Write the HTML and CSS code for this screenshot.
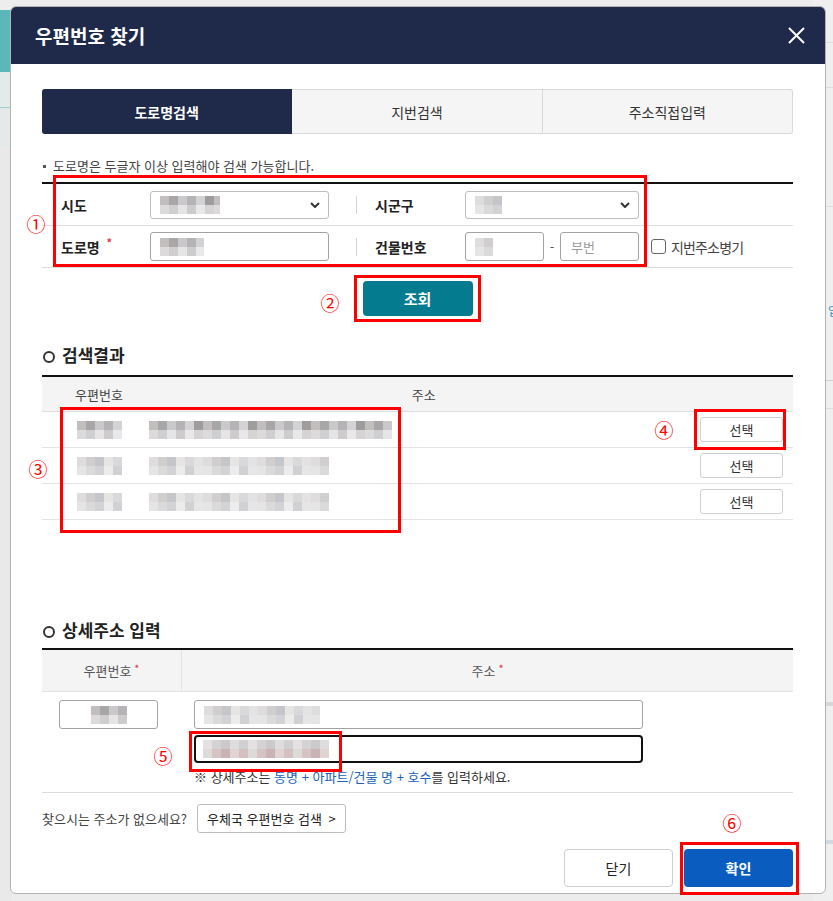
FILE: index.html
```html
<!DOCTYPE html>
<html lang="ko">
<head>
    <meta charset="UTF-8">
    <meta name="viewport" content="width=device-width, initial-scale=1.0">
    <title>우편번호 찾기</title>
    <link rel="stylesheet" href="styles.css">
</head>
<body>
    <div class="bg-left"></div>
    <div class="bg-right"><span class="bg-text">입</span></div>

    <div class="modal">
        <div class="modal-head">
            <h1>우편번호 찾기</h1>
            <button type="button" class="close">
                <svg width="17" height="17" viewBox="0 0 17 17"><path d="M1 1L16 16M16 1L1 16" stroke="#fff" stroke-width="2" fill="none"/></svg>
            </button>
        </div>
        <div class="modal-body">
            <ul class="tabs">
                <li class="on">도로명검색</li>
                <li>지번검색</li>
                <li>주소직접입력</li>
            </ul>
            <p class="note">도로명은 두글자 이상 입력해야 검색 가능합니다.</p>

            <div class="search-form">
                <div class="form-row">
                    <label>시도</label>
                    <div class="field select">
                        <span class="mosaic w60"></span>
                        <svg width="10" height="6" viewBox="0 0 10 6"><path d="M1 1L5 5L9 1" stroke="#333" stroke-width="2" fill="none"/></svg>
                    </div>
                    <span class="divider"></span>
                    <label>시군구</label>
                    <div class="field select">
                        <span class="mosaic light w27"></span>
                        <svg width="10" height="6" viewBox="0 0 10 6"><path d="M1 1L5 5L9 1" stroke="#333" stroke-width="2" fill="none"/></svg>
                    </div>
                </div>
                <div class="form-row">
                    <label>도로명 <em>*</em></label>
                    <div class="field"><span class="mosaic w44"></span></div>
                    <span class="divider"></span>
                    <label>건물번호</label>
                    <div class="bldg">
                        <div class="field"><span class="mosaic light w18"></span></div>
                        <span class="dash">-</span>
                        <div class="field placeholder">부번</div>
                    </div>
                    <label class="check"><span class="box"></span>지번주소병기</label>
                </div>
            </div>

            <div class="search-btn">
                <button type="button" class="btn-teal">조회</button>
            </div>

            <h2 class="sec-title">검색결과</h2>
            <div class="result">
                <div class="result-head">
                    <span class="h-zip">우편번호</span>
                    <span class="h-addr">주소</span>
                </div>
                <div class="result-row">
                    <span class="mosaic w45"></span>
                    <span class="mosaic addr w243"></span>
                    <button type="button" class="btn-pick">선택</button>
                </div>
                <div class="result-row">
                    <span class="mosaic light w45"></span>
                    <span class="mosaic light addr w180"></span>
                    <button type="button" class="btn-pick">선택</button>
                </div>
                <div class="result-row">
                    <span class="mosaic light w45"></span>
                    <span class="mosaic light addr w180"></span>
                    <button type="button" class="btn-pick">선택</button>
                </div>
            </div>

            <h2 class="sec-title detail-title">상세주소 입력</h2>
            <div class="detail">
                <div class="detail-head">
                    <div class="d-zip">우편번호<em>*</em></div>
                    <div class="d-addr">주소<em>*</em></div>
                </div>
                <div class="detail-body">
                    <div class="d-zip">
                        <div class="field zip-field"><span class="mosaic w36"></span></div>
                    </div>
                    <div class="d-addr">
                        <div class="field addr-field"><span class="mosaic light w116"></span></div>
                        <div class="field addr-field focus"><span class="mosaic pink w126"></span></div>
                        <p class="guide">※ 상세주소는 <b>동명 + 아파트/건물 명 + 호수</b>를 입력하세요.</p>
                    </div>
                </div>
            </div>

            <div class="not-found">
                <span>찾으시는 주소가 없으세요?</span>
                <button type="button" class="btn-post">우체국 우편번호 검색 <i>&gt;</i></button>
            </div>

            <div class="actions">
                <button type="button" class="btn-close">닫기</button>
                <button type="button" class="btn-ok">확인</button>
            </div>
        </div>
    </div>

    <!-- annotation marks -->
    <div class="mark box1"></div>
    <div class="mark box2"></div>
    <div class="mark box3"></div>
    <div class="mark box4"></div>
    <div class="mark box5"></div>
    <div class="mark box6"></div>
    <span class="num n1">①</span>
    <span class="num n2">②</span>
    <span class="num n3">③</span>
    <span class="num n4">④</span>
    <span class="num n5">⑤</span>
    <span class="num n6">⑥</span>
</body>
</html>
```

FILE: styles.css
```css
* {
    box-sizing: border-box;
}
body {
    margin: 0;
    height: 901px;
    overflow: hidden;
    position: relative;
    background: #ececec;
    font-family: "Noto Sans CJK KR", "Noto Sans", sans-serif;
    color: #222;
}
button {
    font-family: inherit;
    cursor: pointer;
}
.bg-left {
    position: absolute;
    left: 0;
    top: 0;
    width: 12px;
    height: 901px;
    background:
        linear-gradient(#ededed 0 10px, #5bb7b8 10px 72px, #e2eaea 72px 107px, #9fd0d0 107px 108px, #e6e9e9 108px 147px, #e9e9e9 147px);
}
.bg-right {
    position: absolute;
    right: 0;
    top: 0;
    width: 20px;
    height: 901px;
    overflow: hidden;
    background:
        linear-gradient(#efefef 0 42px, #dcdcdc 42px 43px, #efefef 43px 87px, #dcdcdc 87px 88px, #efefef 88px 206px, #dcdcdc 206px 207px, #efefef 207px 380px, #cfcfcf 380px 381px, #efefef 381px 408px, #dcdcdc 408px 409px, #efefef 409px 702px, #d3d8dc 702px 706px, #efefef 706px 840px, #d3d8dc 840px 844px, #efefef 844px);
}
.bg-text {
    position: absolute;
    left: 15px;
    top: 302px;
    font-size: 12px;
    color: #2f8fb5;
}
.modal {
    position: absolute;
    left: 10px;
    top: 6px;
    width: 816px;
    height: 888px;
    background: #fff;
    border: 1px solid #b3b3b3;
    border-radius: 6px;
    overflow: hidden;
}
.modal-head {
    height: 57px;
    background: #1f2a4a;
    display: flex;
    align-items: center;
    justify-content: space-between;
    padding: 0 20px 0 24px;
}
.modal-head h1 {
    margin: 0;
    color: #fff;
    font-size: 19px;
    font-weight: bold;
}
.close {
    background: none;
    border: none;
    padding: 0;
    display: flex;
}
.modal-body {
    padding: 25px 32px 0 31px;
}
.tabs {
    list-style: none;
    margin: 0;
    padding: 0;
    display: flex;
    height: 45px;
}
.tabs li {
    flex: 1;
    display: flex;
    align-items: center;
    justify-content: center;
    font-size: 14px;
    color: #333;
    background: #f5f5f5;
    border: 1px solid #d9d9d9;
    border-left: none;
}
.tabs li:last-child {
    border-radius: 0 3px 3px 0;
}
.tabs li.on {
    background: #1f2a4a;
    border-color: #1f2a4a;
    color: #fff;
    font-weight: bold;
    border-radius: 3px 0 0 3px;
}
.note {
    margin: 24px 0 0;
    font-size: 13px;
    line-height: 16px;
    color: #444;
    padding-left: 11px;
    position: relative;
}
.note::before {
    content: "";
    position: absolute;
    left: 1px;
    top: 7px;
    width: 3px;
    height: 3px;
    background: #555;
}
.search-form {
    margin-top: 8px;
    border-top: 2px solid #111;
}
.form-row {
    display: grid;
    grid-template-columns: 108px 179px 46px 90px 174px 1fr;
    align-items: center;
    height: 42px;
    border-bottom: 1px solid #dcdcdc;
}
.form-row label {
    font-size: 14px;
    font-weight: bold;
    color: #222;
}
.form-row > label:first-child {
    padding-left: 19px;
}
.form-row em, .detail-head em {
    color: #e0344d;
    font-style: normal;
    font-size: 11px;
    vertical-align: top;
    position: relative;
    top: -3px;
    margin-left: 3px;
}
.field {
    height: 29px;
    border: 1px solid #a3a3a3;
    border-radius: 3px;
    background: #fff;
    display: flex;
    align-items: center;
    padding-left: 9px;
}
.select {
    height: 28px;
    border-color: #bdbdbd;
    justify-content: space-between;
    padding-right: 8px;
}
.divider {
    width: 1px;
    height: 18px;
    background: #d5d5d5;
    margin-left: 27px;
}
.bldg {
    display: flex;
    align-items: center;
}
.bldg .field {
    width: 79px;
}
.dash {
    width: 16px;
    text-align: center;
    font-size: 13px;
    color: #555;
}
.placeholder {
    font-size: 13px;
    color: #9a9a9a;
    padding-left: 10px;
}
.check {
    display: flex;
    align-items: center;
    margin-left: 12px;
    font-size: 13px;
    letter-spacing: -0.06em;
    font-weight: normal !important;
    color: #444 !important;
}
.check .box {
    width: 15px;
    height: 15px;
    border: 1px solid #666;
    border-radius: 3px;
    margin-right: 5px;
}
.mosaic {
    display: inline-block;
    height: 18px;
    background-image:
        repeating-linear-gradient(90deg, #c2bebe 0 9px, #a9a6a8 9px 18px, #c9c9cb 18px 27px, #b5b3b5 27px 36px, #d3d3d6 36px 45px, #9e9c9c 45px 54px),
        repeating-linear-gradient(90deg, #dcdada 0 9px, #cfcfd1 9px 18px, #e5e5e5 18px 27px, #cdcbcb 27px 36px, #e8e8ea 36px 45px, #d6d3d3 45px 54px);
    background-size: 100% 50%;
    background-position: top, bottom;
    background-repeat: no-repeat;
}
.mosaic.light {
    background-image:
        repeating-linear-gradient(90deg, #dedcdc 0 9px, #d0cece 9px 18px, #c5c6c9 18px 27px, #e6e5e3 27px 36px, #d9d9db 36px 45px, #e3e3e3 45px 54px),
        repeating-linear-gradient(90deg, #e6e5e5 0 9px, #dadada 9px 18px, #d3d3d5 18px 27px, #ececec 27px 36px, #d1d1d3 36px 45px, #e6e6e6 45px 54px);
}
.mosaic.pink {
    background-image:
        repeating-linear-gradient(90deg, #e5e1e1 0 9px, #d4d2d2 9px 18px, #ccc9cb 18px 27px, #dedcdc 27px 36px, #d0cfd1 36px 45px),
        repeating-linear-gradient(90deg, #dddada 0 9px, #d6c4c4 9px 18px, #c9b3b7 18px 27px, #e2d3d3 27px 36px, #d4bfc1 36px 45px);
}
.w18 { width: 18px; }
.w27 { width: 27px; }
.w36 { width: 36px; }
.w44 { width: 44px; }
.w45 { width: 45px; }
.w60 { width: 60px; }
.w116 { width: 116px; }
.w126 { width: 126px; }
.w180 { width: 180px; }
.w243 { width: 243px; }
.search-btn {
    margin-top: 13px;
    display: flex;
    justify-content: center;
}
.btn-teal {
    width: 110px;
    height: 35px;
    border: none;
    border-radius: 4px;
    background: #047b8e;
    color: #fff;
    font-size: 15px;
    font-weight: bold;
}
.sec-title {
    margin: 27px 0 0;
    font-size: 17px;
    line-height: 24px;
    font-weight: bold;
    color: #222;
    padding-left: 20px;
    position: relative;
}
.sec-title::before {
    content: "";
    position: absolute;
    left: 1px;
    top: 8px;
    width: 8px;
    height: 8px;
    border: 2px solid #333;
    border-radius: 50%;
}
.result {
    margin-top: 8px;
    border-top: 2px solid #111;
}
.result-head {
    height: 35px;
    background: #f4f4f4;
    border-bottom: 1px solid #dedede;
    display: flex;
    align-items: center;
    font-size: 13px;
    color: #444;
}
.h-zip {
    padding-left: 33px;
}
.h-addr {
    margin-left: 289px;
}
.result-row {
    height: 36px;
    border-bottom: 1px solid #e3e3e3;
    display: flex;
    align-items: center;
    padding-left: 35px;
    padding-right: 10px;
}
.result-row .addr {
    margin-left: 27px;
}
.btn-pick {
    margin-left: auto;
    width: 83px;
    height: 25px;
    background: #fff;
    border: 1px solid #cfcfcf;
    border-radius: 3px;
    font-size: 13px;
    color: #333;
}
.detail-title {
    margin-top: 98px;
}
.detail {
    margin-top: 6px;
    border-top: 2px solid #111;
    border-bottom: 1px solid #dcdcdc;
}
.detail-head {
    display: flex;
    height: 42px;
    background: #f4f4f4;
    border-bottom: 1px solid #e3e3e3;
    font-size: 13px;
    color: #555;
}
.detail-head > div {
    display: flex;
    align-items: center;
    justify-content: center;
}
.detail-head .d-zip {
    border-right: 1px solid #e3e3e3;
}
.d-zip {
    width: 140px;
    flex: none;
}
.d-addr {
    flex: 1;
}
.detail-body {
    display: flex;
    padding: 8px 0 7px;
}
.zip-field {
    width: 99px;
    margin-left: 17px;
    justify-content: center;
    padding-left: 0;
}
.detail-body .d-addr {
    padding-left: 12px;
}
.addr-field {
    width: 449px;
}
.addr-field.focus {
    margin-top: 6px;
    height: 28px;
    border: 2px solid #111;
    border-radius: 4px;
    padding-left: 7px;
}
.guide {
    margin: 6px 0 0;
    font-size: 13px;
    line-height: 16px;
    color: #333;
}
.guide b {
    font-weight: normal;
    color: #1b63b8;
}
.not-found {
    margin-top: 11px;
    display: flex;
    align-items: center;
    font-size: 13px;
    color: #444;
}
.btn-post {
    margin-left: 10px;
    height: 29px;
    padding: 0 9px;
    background: #fff;
    border: 1px solid #bcbcbc;
    border-radius: 3px;
    font-size: 13px;
    color: #222;
}
.btn-post i {
    font-style: normal;
    margin-left: 3px;
}
.actions {
    margin-top: 16px;
    display: flex;
    justify-content: flex-end;
    gap: 11px;
}
.btn-close, .btn-ok {
    width: 109px;
    height: 38px;
    border-radius: 4px;
    font-size: 14px;
}
.btn-close {
    background: #fff;
    border: 1px solid #cfcfcf;
    color: #222;
}
.btn-ok {
    background: #0a5cbe;
    border: none;
    color: #fff;
    font-weight: bold;
}
.mark {
    position: absolute;
    border: 3px solid #f00;
}
.box1 { left: 53px; top: 175px; width: 594px; height: 92px; }
.box2 { left: 354px; top: 275px; width: 127px; height: 47px; }
.box3 { left: 60px; top: 407px; width: 341px; height: 126px; }
.box4 { left: 694px; top: 409px; width: 92px; height: 41px; }
.box5 { left: 189px; top: 731px; width: 153px; height: 41px; }
.box6 { left: 680px; top: 842px; width: 119px; height: 53px; }
.num {
    position: absolute;
    font-size: 19px;
    line-height: 19px;
    color: #f00;
    transform: translate(-50%, -50%);
}
.n1 { left: 36px; top: 223px; }
.n2 { left: 330px; top: 302px; }
.n3 { left: 38px; top: 468px; }
.n4 { left: 664px; top: 429px; }
.n5 { left: 163px; top: 755px; }
.n6 { left: 732px; top: 822px; }
```
